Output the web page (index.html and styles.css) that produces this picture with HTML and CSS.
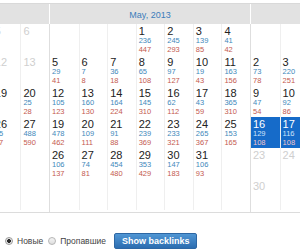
FILE: index.html
```html
<!DOCTYPE html>
<html lang="ru">
<head>
<meta charset="utf-8">
<title>Backlinks calendar</title>
<link rel="stylesheet" href="styles.css">
</head>
<body>
<div class="cal">
  <div class="months">
    <section class="month">
      <div class="mhead">April, 2013</div>
      <div class="grid">
        <div class="cell"></div>
        <div class="cell"><div class="d off">1</div></div>
        <div class="cell"><div class="d off">2</div></div>
        <div class="cell"><div class="d off">3</div></div>
        <div class="cell"><div class="d off">4</div></div>
        <div class="cell"><div class="d off">5</div></div>
        <div class="cell"><div class="d off">6</div></div>
        <div class="cell"><div class="d off">7</div></div>
        <div class="cell"><div class="d off">8</div></div>
        <div class="cell"><div class="d off">9</div></div>
        <div class="cell"><div class="d off">10</div></div>
        <div class="cell"><div class="d off">11</div></div>
        <div class="cell"><div class="d off">12</div></div>
        <div class="cell"><div class="d off">13</div></div>
        <div class="cell"><div class="d off">14</div></div>
        <div class="cell"><div class="d off">15</div></div>
        <div class="cell"><div class="d off">16</div></div>
        <div class="cell"><div class="d off">17</div></div>
        <div class="cell"><div class="d off">18</div></div>
        <div class="cell"><div class="d">19</div><div class="b">8</div><div class="r">4</div></div>
        <div class="cell"><div class="d">20</div><div class="b">25</div><div class="r">28</div></div>
        <div class="cell"><div class="d">21</div><div class="b">31</div><div class="r">40</div></div>
        <div class="cell"><div class="d">22</div><div class="b">57</div><div class="r">62</div></div>
        <div class="cell"><div class="d">23</div><div class="b">44</div><div class="r">39</div></div>
        <div class="cell"><div class="d">24</div><div class="b">70</div><div class="r">81</div></div>
        <div class="cell"><div class="d">25</div><div class="b">52</div><div class="r">47</div></div>
        <div class="cell"><div class="d">26</div><div class="b">65</div><div class="r">77</div></div>
        <div class="cell"><div class="d">27</div><div class="b">488</div><div class="r">590</div></div>
        <div class="cell"><div class="d">28</div><div class="b">61</div><div class="r">73</div></div>
        <div class="cell"><div class="d">29</div><div class="b">48</div><div class="r">55</div></div>
        <div class="cell"><div class="d">30</div><div class="b">39</div><div class="r">42</div></div>
        <div class="cell"></div><div class="cell"></div><div class="cell"></div><div class="cell"></div>
        <div class="cell"></div><div class="cell"></div><div class="cell"></div><div class="cell"></div>
        <div class="cell"></div><div class="cell"></div><div class="cell"></div>
      </div>
    </section>
    <section class="month">
      <div class="mhead">May, 2013</div>
      <div class="grid">
        <div class="cell"></div><div class="cell"></div><div class="cell"></div>
        <div class="cell"><div class="d">1</div><div class="b">236</div><div class="r">447</div></div>
        <div class="cell"><div class="d">2</div><div class="b">245</div><div class="r">293</div></div>
        <div class="cell"><div class="d">3</div><div class="b">139</div><div class="r">85</div></div>
        <div class="cell"><div class="d">4</div><div class="b">41</div><div class="r">42</div></div>
        <div class="cell"><div class="d">5</div><div class="b">29</div><div class="r">41</div></div>
        <div class="cell"><div class="d">6</div><div class="b">7</div><div class="r">8</div></div>
        <div class="cell"><div class="d">7</div><div class="b">36</div><div class="r">18</div></div>
        <div class="cell"><div class="d">8</div><div class="b">65</div><div class="r">108</div></div>
        <div class="cell"><div class="d">9</div><div class="b">97</div><div class="r">127</div></div>
        <div class="cell"><div class="d">10</div><div class="b">19</div><div class="r">43</div></div>
        <div class="cell"><div class="d">11</div><div class="b">163</div><div class="r">156</div></div>
        <div class="cell"><div class="d">12</div><div class="b">105</div><div class="r">123</div></div>
        <div class="cell"><div class="d">13</div><div class="b">160</div><div class="r">130</div></div>
        <div class="cell"><div class="d">14</div><div class="b">164</div><div class="r">224</div></div>
        <div class="cell"><div class="d">15</div><div class="b">145</div><div class="r">310</div></div>
        <div class="cell"><div class="d">16</div><div class="b">62</div><div class="r">112</div></div>
        <div class="cell"><div class="d">17</div><div class="b">43</div><div class="r">59</div></div>
        <div class="cell"><div class="d">18</div><div class="b">365</div><div class="r">310</div></div>
        <div class="cell"><div class="d">19</div><div class="b">478</div><div class="r">462</div></div>
        <div class="cell"><div class="d">20</div><div class="b">109</div><div class="r">111</div></div>
        <div class="cell"><div class="d">21</div><div class="b">91</div><div class="r">88</div></div>
        <div class="cell"><div class="d">22</div><div class="b">239</div><div class="r">369</div></div>
        <div class="cell"><div class="d">23</div><div class="b">233</div><div class="r">321</div></div>
        <div class="cell"><div class="d">24</div><div class="b">265</div><div class="r">367</div></div>
        <div class="cell"><div class="d">25</div><div class="b">153</div><div class="r">165</div></div>
        <div class="cell"><div class="d">26</div><div class="b">106</div><div class="r">137</div></div>
        <div class="cell"><div class="d">27</div><div class="b">74</div><div class="r">81</div></div>
        <div class="cell"><div class="d">28</div><div class="b">454</div><div class="r">480</div></div>
        <div class="cell"><div class="d">29</div><div class="b">353</div><div class="r">429</div></div>
        <div class="cell"><div class="d">30</div><div class="b">147</div><div class="r">183</div></div>
        <div class="cell"><div class="d">31</div><div class="b">106</div><div class="r">93</div></div>
        <div class="cell"></div>
        <div class="cell"></div><div class="cell"></div><div class="cell"></div><div class="cell"></div>
        <div class="cell"></div><div class="cell"></div><div class="cell"></div>
      </div>
    </section>
    <section class="month">
      <div class="mhead">June, 2013</div>
      <div class="grid">
        <div class="cell"></div><div class="cell"></div><div class="cell"></div><div class="cell"></div>
        <div class="cell"></div><div class="cell"></div>
        <div class="cell"><div class="d">1</div><div class="b">58</div><div class="r">64</div></div>
        <div class="cell"><div class="d">2</div><div class="b">73</div><div class="r">78</div></div>
        <div class="cell"><div class="d">3</div><div class="b">220</div><div class="r">251</div></div>
        <div class="cell"><div class="d">4</div><div class="b">187</div><div class="r">204</div></div>
        <div class="cell"><div class="d">5</div><div class="b">142</div><div class="r">166</div></div>
        <div class="cell"><div class="d">6</div><div class="b">118</div><div class="r">97</div></div>
        <div class="cell"><div class="d">7</div><div class="b">84</div><div class="r">102</div></div>
        <div class="cell"><div class="d">8</div><div class="b">36</div><div class="r">49</div></div>
        <div class="cell"><div class="d">9</div><div class="b">47</div><div class="r">54</div></div>
        <div class="cell"><div class="d">10</div><div class="b">92</div><div class="r">86</div></div>
        <div class="cell"><div class="d">11</div><div class="b">131</div><div class="r">140</div></div>
        <div class="cell"><div class="d">12</div><div class="b">176</div><div class="r">158</div></div>
        <div class="cell"><div class="d">13</div><div class="b">95</div><div class="r">121</div></div>
        <div class="cell"><div class="d">14</div><div class="b">68</div><div class="r">77</div></div>
        <div class="cell"><div class="d">15</div><div class="b">52</div><div class="r">60</div></div>
        <div class="cell sel"><div class="d">16</div><div class="b">129</div><div class="r">108</div></div>
        <div class="cell sel"><div class="d">17</div><div class="b">116</div><div class="r">108</div></div>
        <div class="cell"><div class="d off">18</div></div>
        <div class="cell"><div class="d off">19</div></div>
        <div class="cell"><div class="d off">20</div></div>
        <div class="cell"><div class="d off">21</div></div>
        <div class="cell"><div class="d off">22</div></div>
        <div class="cell"><div class="d off">23</div></div>
        <div class="cell"><div class="d off">24</div></div>
        <div class="cell"><div class="d off">25</div></div>
        <div class="cell"><div class="d off">26</div></div>
        <div class="cell"><div class="d off">27</div></div>
        <div class="cell"><div class="d off">28</div></div>
        <div class="cell"><div class="d off">29</div></div>
        <div class="cell"><div class="d off">30</div></div>
        <div class="cell"></div><div class="cell"></div><div class="cell"></div>
        <div class="cell"></div><div class="cell"></div><div class="cell"></div>
      </div>
    </section>
  </div>
  <form class="controls">
    <label class="opt"><input class="radio" type="radio" name="kind" checked><span>Новые</span></label>
    <label class="opt"><input class="radio" type="radio" name="kind"><span>Пропавшие</span></label>
    <button class="btn" type="button">Show backlinks</button>
  </form>
</div>
</body>
</html>
```
FILE: styles.css
```css
html, body {
  margin: 0;
  padding: 0;
  background: #fff;
}
body {
  width: 300px;
  height: 252px;
  overflow: hidden;
  font-family: "Liberation Sans", Arial, sans-serif;
}
.cal {
  padding-top: 3px;
}
.months {
  display: flex;
  margin-left: -152px;
  border-top: 1px solid #d9d9d9;
  border-bottom: 1px solid #dcdcdc;
}
.month {
  flex: 0 0 201px;
  width: 201px;
}
.mhead {
  box-sizing: border-box;
  height: 20px;
  padding-top: 3px;
  line-height: 17px;
  border-left: 1px solid #fff;
  background: #e2e2e2;
  text-align: center;
  color: #3b7dbb;
  font-size: 9px;
}
.grid {
  display: grid;
  grid-template-columns: repeat(7, 1fr);
  grid-auto-rows: 31px;
  border-left: 1px solid #dedede;
  padding-bottom: 2px;
}
.cell {
  box-sizing: border-box;
  padding: 3px 0 0 2px;
  border-left: 1px solid #efefef;
}
.cell:nth-child(7n+1) {
  border-left: none;
}
.d {
  font-size: 11px;
  line-height: 9px;
  color: #222;
}
.d.off {
  color: #cfcfcf;
}
.b, .r {
  font-size: 7.5px;
  line-height: 9px;
}
.b {
  color: #4189bb;
}
.r {
  color: #c45a50;
}
.sel {
  background: #166bc9;
}
.sel .d {
  color: #fff;
}
.sel .b {
  color: #cfe3fa;
}
.sel .r {
  color: #f2c6c9;
}
.controls {
  display: flex;
  align-items: center;
  margin: 0;
  padding: 20px 0 0 5px;
}
.opt {
  display: flex;
  align-items: center;
  font-size: 8.5px;
  color: #444;
  margin-right: 5px;
}
.opt + .opt {
  margin-right: 8px;
}
.radio {
  appearance: none;
  -webkit-appearance: none;
  box-sizing: border-box;
  width: 8px;
  height: 8px;
  margin: 0 4px 0 0;
  border: 1px solid #b5b5b5;
  border-radius: 50%;
  background: linear-gradient(#f4f4f4, #dedede);
}
.radio:checked {
  border-color: #9a9a9a;
  background: radial-gradient(circle, #2b2b2b 0, #2b2b2b 1.6px, #e8e8e8 2.2px);
}
.btn {
  height: 16px;
  padding: 0 7px;
  border: 1px solid #2d67a4;
  border-radius: 2px;
  background: linear-gradient(#5096d4, #2c6db0);
  color: #fff;
  font-family: "Liberation Sans", Arial, sans-serif;
  font-weight: bold;
  font-size: 9px;
  line-height: 14px;
}
```
